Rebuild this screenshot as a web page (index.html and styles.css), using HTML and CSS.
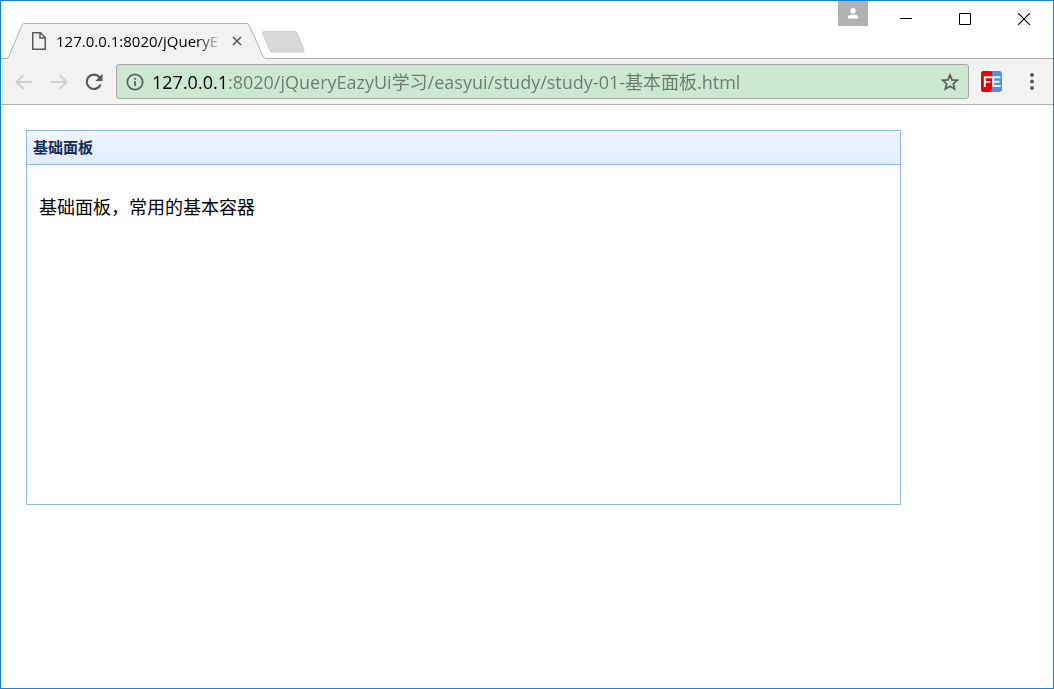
FILE: index.html
```html
<!DOCTYPE html>
<html lang="zh-CN">
<head>
    <meta charset="UTF-8">
    <meta name="viewport" content="width=device-width, initial-scale=1.0">
    <title>基本面板</title>
    <link rel="stylesheet" href="styles.css">
</head>
<body>
    <div class="window">
        <header class="title-bar">
            <div class="tab">
                <svg class="tab-shape" width="260" height="36" viewBox="0 0 260 36">
                    <path d="M0 35.5C2 35.5 2.500 34.500 3 33L16 2Q17 .5 18 .5H241Q242.500 .5 243 2L257 33Q258 35.500 260 35.500V36H0Z" fill="#f2f2f2"/>
                    <path d="M0 35.5C2 35.5 2.500 34.500 3 33L16 2Q17 .5 18 .5H241Q242.500 .5 243 2L257 33Q258 35.500 260 35.500" fill="none" stroke="#b0b0b0"/>
                </svg>
                <svg class="tab-icon" width="14" height="18" viewBox="0 0 14 18" fill="none" stroke="#5a5a5a" stroke-width="1.500">
                    <path d="M.75 .75H8.500L13.250 5.500V17.250H.75ZM8 .75V6H13.250"/>
                </svg>
                <span class="tab-title">127.0.0.1:8020/jQueryE</span>
                <button type="button" class="tab-close" aria-label="关闭标签页">
                    <svg width="10" height="10" viewBox="0 0 10 10" stroke="#5a5a5a" stroke-width="1.600">
                        <path d="M1 1L9 9M9 1L1 9"/>
                    </svg>
                </button>
            </div>
            <button type="button" class="new-tab" aria-label="新标签页">
                <svg width="43" height="22" viewBox="0 0 43 22">
                    <path d="M2 .5H33Q34.500 .5 35 2L42 19Q42.500 21 41 21H10Q8.500 21 8 19.500L.7 2.500Q.3 .5 2 .5Z" fill="#d8d8d8" stroke="#cbcbcb"/>
                </svg>
            </button>
            <div class="window-controls">
                <button type="button" class="avatar" aria-label="用户">
                    <svg width="12" height="11" viewBox="0 0 12 11" fill="#fff">
                        <circle cx="6" cy="2.700" r="2.700"/>
                        <path d="M1 10.500V9C1 7.300 3.500 6.500 6 6.500S11 7.300 11 9V10.500Z"/>
                    </svg>
                </button>
                <button type="button" class="control" aria-label="最小化">
                    <svg width="12" height="12" viewBox="0 0 12 12"><path d="M0 5.500H12" stroke="#000"/></svg>
                </button>
                <button type="button" class="control" aria-label="最大化">
                    <svg width="12" height="12" viewBox="0 0 12 12"><path d="M.5 .5H11.500V11.500H.5Z" fill="none" stroke="#000"/></svg>
                </button>
                <button type="button" class="control" aria-label="关闭">
                    <svg width="12" height="12" viewBox="0 0 12 12"><path d="M0 0L12 12M12 0L0 12" stroke="#000" stroke-width="1.100"/></svg>
                </button>
            </div>
        </header>

        <nav class="toolbar">
            <button type="button" class="tool" aria-label="后退" disabled>
                <svg width="18" height="16" viewBox="0 0 18 16" fill="none" stroke="#cfcfcf" stroke-width="2">
                    <path d="M17 8H2M8.500 1L1.500 8L8.500 15"/>
                </svg>
            </button>
            <button type="button" class="tool" aria-label="前进" disabled>
                <svg width="18" height="16" viewBox="0 0 18 16" fill="none" stroke="#cfcfcf" stroke-width="2">
                    <path d="M1 8H16M9.500 1L16.500 8L9.500 15"/>
                </svg>
            </button>
            <button type="button" class="tool" aria-label="重新加载">
                <svg width="18" height="18" viewBox="0 0 18 18">
                    <path d="M14.500 4.200A7.200 7.200 0 1 0 15.600 11.500" fill="none" stroke="#5a5a5a" stroke-width="2.200"/>
                    <path d="M17.500 .8V8H10.300Z" fill="#5a5a5a"/>
                </svg>
            </button>
            <div class="address-bar">
                <svg width="18" height="18" viewBox="0 0 18 18">
                    <circle cx="9" cy="9" r="7.700" fill="none" stroke="#5c675e" stroke-width="1.800"/>
                    <path d="M8.100 8H9.900V13H8.100ZM8.100 5H9.900V6.800H8.100Z" fill="#5c675e"/>
                </svg>
                <input type="text" class="address" aria-label="地址" spellcheck="false" value="127.0.0.1:8020/jQueryEazyUi学习/easyui/study/study-01-基本面板.html">
                <button type="button" class="bookmark" aria-label="收藏">
                    <svg width="18" height="18" viewBox="0 0 18 18">
                        <path d="M9 2L11 6.900L16.400 7.300L12.300 10.800L13.600 16L9 13.200L4.400 16L5.700 10.800L1.600 7.300L7 6.900Z" fill="none" stroke="#5a5f5b" stroke-width="1.700"/>
                    </svg>
                </button>
            </div>
            <button type="button" class="extension" aria-label="FE">
                <svg width="21" height="21" viewBox="0 0 21 21">
                    <rect width="21" height="21" rx="3" fill="#4a90f7"/>
                    <path d="M3 0H9.500Q12 .5 11 4V17Q11 20 8.500 21H3Q0 21 0 18V3Q0 0 3 0Z" fill="#ee0000"/>
                    <path d="M3.800 16V6.300H10.800M3.800 10.900H9.500M19.500 6.300H12.200V15H19.500M11.500 10.700H18.500" fill="none" stroke="#fff" stroke-width="1.900"/>
                </svg>
            </button>
            <button type="button" class="menu" aria-label="菜单">
                <svg width="4" height="17" viewBox="0 0 4 17" fill="#5a5a5a">
                    <circle cx="2" cy="2" r="2"/>
                    <circle cx="2" cy="8.500" r="2"/>
                    <circle cx="2" cy="15" r="2"/>
                </svg>
            </button>
        </nav>

        <main class="page">
            <section class="panel">
                <h1 class="panel-header">基础面板</h1>
                <div class="panel-body">
                    <p>基础面板，常用的基本容器</p>
                </div>
            </section>
        </main>
    </div>
</body>
</html>
```

FILE: styles.css
```css
* {
    box-sizing: border-box;
}
body {
    margin: 0;
    font-family: "Open Sans", "Noto Sans CJK SC", sans-serif;
    color: #000;
    background-color: #fff;
}
button {
    display: flex;
    align-items: center;
    justify-content: center;
    padding: 0;
    border: none;
    background: none;
}
svg {
    display: block;
    flex: none;
}
.window {
    display: flex;
    flex-direction: column;
    min-height: 100vh;
    border: 1px solid #1a80d4;
}

/* Title bar */
.title-bar {
    display: flex;
    align-items: flex-end;
    height: 58px;
    padding-left: 5px;
    border-bottom: 1px solid #b0b0b0;
}
.tab {
    position: relative;
    display: flex;
    align-items: center;
    width: 260px;
    height: 36px;
    margin-bottom: -1px;
    padding: 0 24px 0 26px;
}
.tab-shape {
    position: absolute;
    left: 0;
    top: 0;
}
.tab-icon,
.tab-title,
.tab-close {
    position: relative;
}
.tab-title {
    flex: 1;
    margin: 0 10px;
    overflow: hidden;
    white-space: nowrap;
    font-size: 15px;
    line-height: 20px;
    -webkit-mask-image: linear-gradient(to left, transparent, #000 24px);
    mask-image: linear-gradient(to left, transparent, #000 24px);
}
.new-tab {
    margin: 0 0 5px -4px;
}
.window-controls {
    display: flex;
    align-self: flex-start;
    margin-left: auto;
}
.avatar {
    width: 30px;
    height: 25px;
    margin-right: 8px;
    background-color: #b2b2b2;
}
.control {
    width: 59px;
    height: 36px;
}

/* Toolbar */
.toolbar {
    display: flex;
    align-items: center;
    height: 46px;
    padding: 0 15px 0 5px;
    background-color: #f2f2f2;
    border-bottom: 1px solid #b0b0b0;
}
.tool {
    width: 35px;
    height: 35px;
}
.address-bar {
    display: flex;
    flex: 1;
    align-items: center;
    height: 35px;
    margin-left: 5px;
    padding: 0 9px;
    background-color: #cde8d0;
    border: 1px solid #a6a6a6;
    border-radius: 3px;
}
.address {
    flex: 1;
    min-width: 0;
    margin: 0 8px;
    padding: 0;
    border: none;
    outline: none;
    font-family: inherit;
    font-size: 18px;
    line-height: 24px;
    /* host in black, rest of the url in grey */
    background: linear-gradient(to right, #000 76px, #6b7a6d 76px);
    -webkit-background-clip: text;
    background-clip: text;
    color: transparent;
    caret-color: #000;
}
.extension {
    width: 45px;
    height: 35px;
}
.menu {
    width: 12px;
    height: 35px;
    margin-left: 12px;
}

/* Page */
.page {
    flex: 1;
    padding: 25px;
}
.panel {
    display: flex;
    flex-direction: column;
    width: 875px;
    max-width: 100%;
    min-height: 375px;
    border: 1px solid #95b8e7;
}
.panel-header {
    margin: 0;
    padding: 6px;
    border-bottom: 1px solid #95b8e7;
    background: linear-gradient(to bottom, #eff5ff, #e0ecff);
    color: #0e2d5f;
    font-size: 15px;
    font-weight: bold;
    line-height: 21px;
}
.panel-body {
    padding: 12px;
    font-size: 18px;
    line-height: 24px;
}
.panel-body p {
    margin: 18px 0;
}
```
